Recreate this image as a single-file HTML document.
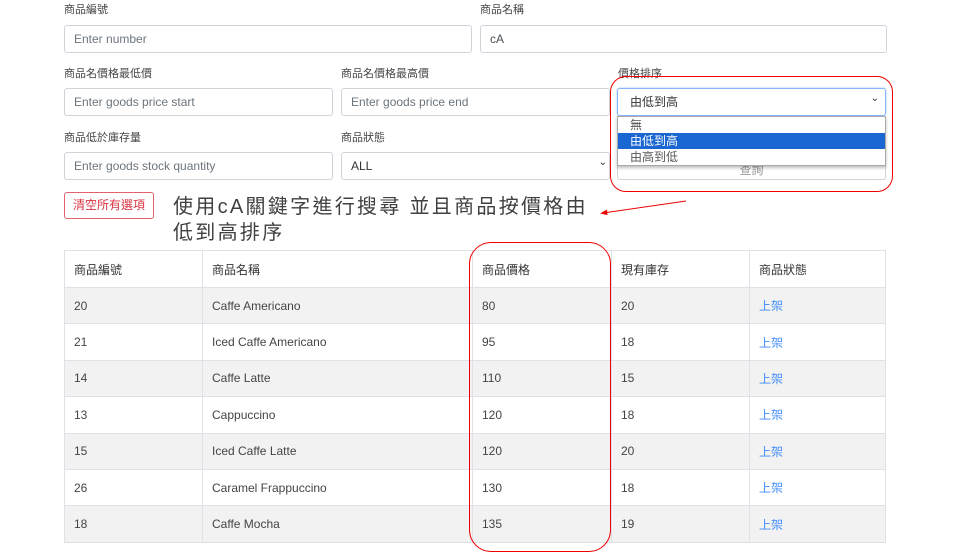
<!DOCTYPE html>
<html><head><meta charset="utf-8"><style>
*{box-sizing:border-box;margin:0;padding:0}
body{width:960px;height:540px;overflow:hidden;background:#fff;font-family:"Liberation Sans","Noto Sans CJK TC",sans-serif;color:#212529;position:relative}
.a{position:absolute}
.lb{font-size:11px;color:#444;line-height:14px}
.in{border:1px solid #ced4da;border-radius:3px;height:28px;font-size:12px;line-height:26px;color:#6c757d;padding:0 9px;background:#fff;white-space:nowrap}
table{position:absolute;left:64px;top:250px;border-collapse:collapse;font-size:12px;width:822px;color:#444}
td,th{border:1px solid #dee2e6;height:36.4px;padding:0 9px;text-align:left;font-weight:normal;color:#444}
th{height:37px;color:#333}
tr:nth-child(even) td{background:#f2f2f2}
.b{color:#3d8bfd}
</style></head><body>
<div class="a lb" style="left:64px;top:3px">商品編號</div>
<div class="a lb" style="left:480px;top:3px">商品名稱</div>
<div class="a in" style="left:64px;top:25px;width:408px">Enter number</div>
<div class="a in" style="left:480px;top:25px;width:407px;color:#495057">cA</div>
<div class="a lb" style="left:64px;top:67px">商品名價格最低價</div>
<div class="a lb" style="left:341px;top:67px">商品名價格最高價</div>
<div class="a lb" style="left:618px;top:67px">價格排序</div>
<div class="a in" style="left:64px;top:88px;width:269px">Enter goods price start</div>
<div class="a in" style="left:341px;top:88px;width:269px">Enter goods price end</div>
<div class="a in" style="left:617px;top:88px;width:269px;color:#333;border-color:#86b7fe;box-shadow:0 0 2px #9ec5fe;padding-left:12px">由低到高<span style="position:absolute;right:6px;top:-3px;font-size:10px">&#8964;</span></div>
<div class="a lb" style="left:64px;top:131px">商品低於庫存量</div>
<div class="a lb" style="left:341px;top:131px">商品狀態</div>
<div class="a in" style="left:64px;top:152px;width:269px">Enter goods stock quantity</div>
<div class="a in" style="left:341px;top:152px;width:269px;color:#333">ALL<span style="position:absolute;right:2px;top:-3px;font-size:10px">&#8964;</span></div>
<div class="a in" style="left:617px;top:160px;width:269px;height:20px;text-align:center;line-height:18px;color:#999">查詢</div>
<div class="a" style="left:617px;top:116px;width:269px;height:50px;border:1px solid #aaa;background:#fff;font-size:12px;color:#555;box-shadow:0 2px 3px rgba(0,0,0,.25)">
<div style="height:16px;padding-left:12px;line-height:16px">無</div>
<div style="height:16px;padding-left:12px;line-height:16px;background:#1a66d2;color:#fff">由低到高</div>
<div style="height:16px;padding-left:12px;line-height:16px">由高到低</div></div>
<div class="a" style="left:610px;top:76px;width:283px;height:116px;border:1px solid #e00;border-radius:16px"></div>
<div class="a" style="left:64px;top:192px;width:90px;height:27px;border:1px solid #e4606d;border-radius:3px;color:#dc3545;font-size:12px;text-align:center;line-height:25px">清空所有選項</div>
<div class="a" style="left:173px;top:194px;font-size:20px;letter-spacing:2.3px;line-height:26px;color:#404040;white-space:nowrap">使用cA關鍵字進行搜尋 並且商品按價格由<br>低到高排序</div>
<svg class="a" style="left:595px;top:198px" width="95" height="20"><line x1="91" y1="3" x2="8" y2="15" stroke="#e00" stroke-width="1"/><path d="M5 15.5 L12 11.5 L12.5 17 Z" fill="#e00"/></svg>
<table>
<tr><th style="width:138px">商品編號</th><th style="width:270px">商品名稱</th><th style="width:139px">商品價格</th><th style="width:138px">現有庫存</th><th>商品狀態</th></tr>
<tr><td>20</td><td>Caffe Americano</td><td>80</td><td>20</td><td class="b">上架</td></tr>
<tr><td>21</td><td>Iced Caffe Americano</td><td>95</td><td>18</td><td class="b">上架</td></tr>
<tr><td>14</td><td>Caffe Latte</td><td>110</td><td>15</td><td class="b">上架</td></tr>
<tr><td>13</td><td>Cappuccino</td><td>120</td><td>18</td><td class="b">上架</td></tr>
<tr><td>15</td><td>Iced Caffe Latte</td><td>120</td><td>20</td><td class="b">上架</td></tr>
<tr><td>26</td><td>Caramel Frappuccino</td><td>130</td><td>18</td><td class="b">上架</td></tr>
<tr><td>18</td><td>Caffe Mocha</td><td>135</td><td>19</td><td class="b">上架</td></tr>
</table>
<div class="a" style="left:469px;top:242px;width:142px;height:310px;border:1px solid #e00;border-radius:22px"></div>
</body></html>
